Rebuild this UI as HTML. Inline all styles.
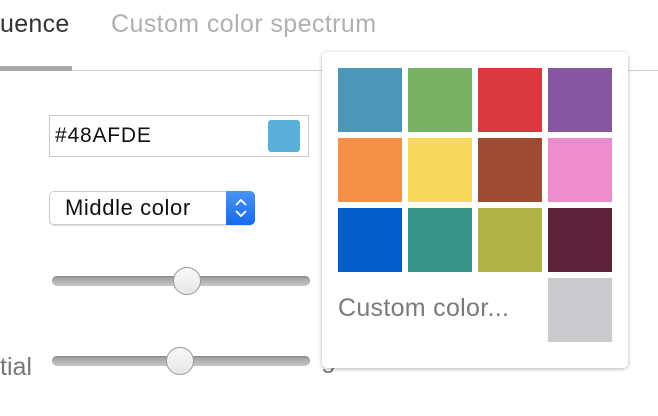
<!DOCTYPE html>
<html><head><style>
body{margin:0;width:658px;height:416px;background:#fff;position:relative;overflow:hidden;font-family:"Liberation Sans",Helvetica,Arial,sans-serif}
.a{position:absolute}
.sw{position:absolute;width:64px;height:64px}
.track{position:absolute;left:52px;width:258px;height:10px;border-radius:5px;background:linear-gradient(#9a9a9a,#c8c8c8);box-shadow:inset 0 1px 1px #888}
.thumb{position:absolute;width:28px;height:28px;border-radius:50%;background:linear-gradient(#fafafa,#e6e6e6);border:1px solid #999;box-sizing:border-box}
</style></head><body>
<div class="a" style="left:0;top:10px;font-size:25px;letter-spacing:0.3px;color:#333">uence</div>
<div class="a" style="left:111px;top:10px;font-size:25px;letter-spacing:0.4px;color:#b0b0b0">Custom color spectrum</div>
<div class="a" style="left:0;top:70px;width:658px;height:1px;background:#cfcfcf"></div>
<div class="a" style="left:0;top:66px;width:72px;height:5px;background:#a8a8a8"></div>

<div class="a" style="left:49px;top:115px;width:260px;height:42px;border:1px solid #c8c8c8;box-sizing:border-box"></div>
<div class="a" style="left:55px;top:124px;font-size:21px;letter-spacing:0.8px;color:#111">#48AFDE</div>
<div class="a" style="left:268px;top:120px;width:32px;height:32px;border-radius:3px;background:#5aafdb"></div>

<div class="a" style="left:49px;top:191px;width:206px;height:34px;border:1px solid #ccc;border-radius:5px;box-sizing:border-box;box-shadow:0 1px 1px #ddd"></div>
<div class="a" style="left:226px;top:191px;width:29px;height:34px;border-radius:0 5px 5px 0;background:linear-gradient(#4a94f8,#1769f0)"></div>
<svg class="a" style="left:230px;top:194px" width="22" height="28"><path d="M6 11 L11 6 L16 11 M6 17 L11 22 L16 17" stroke="#fff" stroke-width="1.8" fill="none"/></svg>
<div class="a" style="left:65px;top:195px;font-size:22px;letter-spacing:0.6px;color:#111">Middle color</div>

<div class="track" style="top:276px"></div>
<div class="thumb" style="left:173px;top:267px"></div>
<div class="track" style="top:356px"></div>
<div class="thumb" style="left:166px;top:347px"></div>
<div class="a" style="left:0;top:353px;font-size:25px;color:#777">tial</div>
<div class="a" style="left:322px;top:352px;font-size:23px;color:#777">5</div>

<div class="a" style="left:322px;top:52px;width:306px;height:316px;background:#fff;border-radius:5px;box-shadow:0 1px 4px rgba(0,0,0,.3)"></div>
<div class="sw" style="left:338px;top:68px;background:#4b95b6"></div>
<div class="sw" style="left:408px;top:68px;background:#79b164"></div>
<div class="sw" style="left:478px;top:68px;background:#d7393f"></div>
<div class="sw" style="left:548px;top:68px;background:#8557a1"></div>
<div class="sw" style="left:338px;top:138px;background:#f49046"></div>
<div class="sw" style="left:408px;top:138px;background:#f8d85a"></div>
<div class="sw" style="left:478px;top:138px;background:#9e4b33"></div>
<div class="sw" style="left:548px;top:138px;background:#ed8ccd"></div>
<div class="sw" style="left:338px;top:208px;background:#065ecd"></div>
<div class="sw" style="left:408px;top:208px;background:#379387"></div>
<div class="sw" style="left:478px;top:208px;background:#b1b247"></div>
<div class="sw" style="left:548px;top:208px;background:#5c2237"></div>
<div class="sw" style="left:548px;top:278px;background:#cbcbcd"></div>
<div class="a" style="left:338px;top:294px;font-size:25px;letter-spacing:0.3px;color:#7a7a7e">Custom color...</div>
</body></html>
